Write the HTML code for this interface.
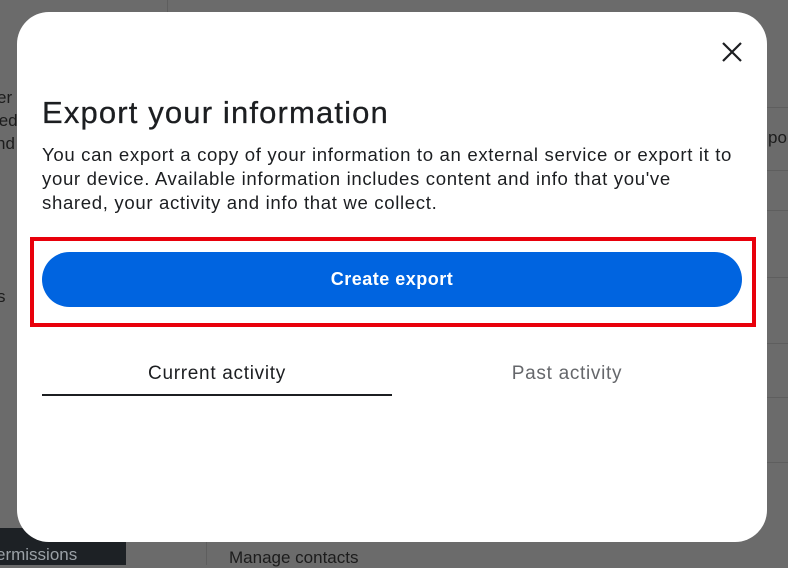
<!DOCTYPE html>
<html><head><meta charset="utf-8"><style>
*{margin:0;padding:0;box-sizing:border-box}
body{width:788px;height:565px;overflow:hidden;background:#6b6b6b;font-family:"Liberation Sans",sans-serif;position:relative}
.bg{position:absolute;color:#1c1c1c;font-size:17px}
.line{position:absolute;background:#5e5e5e;height:1px}
.modal{position:absolute;left:17px;top:12px;width:750px;height:530px;background:#fff;border-radius:32px}
h1{position:absolute;left:25px;top:83px;font-size:31px;font-weight:normal;color:#1c1e21;letter-spacing:1.15px;white-space:nowrap;-webkit-text-stroke:0.3px #1c1e21}
p{position:absolute;left:25px;top:131px;width:720px;font-size:18.6px;line-height:24px;color:#1c1e21;letter-spacing:0.65px;white-space:nowrap}
.red{position:absolute;left:13px;top:225px;width:726px;height:90px;border:4px solid #e8000b}
.btn{position:absolute;left:25px;top:240px;width:700px;height:55px;border-radius:28px;background:#0064e0;color:#fff;font-size:18px;font-weight:bold;text-align:center;line-height:55px;letter-spacing:0.5px}
.tab{position:absolute;top:351px;font-size:19px;text-align:center;width:350px;letter-spacing:0.7px}
.ul{position:absolute;left:25px;top:382px;width:350px;height:2px;background:#1c1e21}
</style></head><body>
<div class="line" style="left:167px;top:0;width:1px;height:12px"></div>
<div class="line" style="left:767px;top:107px;width:21px"></div>
<div class="line" style="left:767px;top:170px;width:21px"></div>
<div class="line" style="left:767px;top:210px;width:21px"></div>
<div class="line" style="left:767px;top:277px;width:21px"></div>
<div class="line" style="left:767px;top:343px;width:21px"></div>
<div class="line" style="left:767px;top:397px;width:21px"></div>
<div class="line" style="left:767px;top:462px;width:21px"></div>
<div class="bg" style="left:-3px;top:88px">er</div>
<div class="bg" style="left:-6px;top:111px">ted</div>
<div class="bg" style="left:-4px;top:134px">nd</div>
<div class="bg" style="left:-3px;top:287px">s</div>
<div class="bg" style="left:768px;top:128px">po</div>
<div style="position:absolute;left:0;top:528px;width:126px;height:37px;background:#1d2125"></div>
<div class="bg" style="left:-4px;top:545px;color:#9aa0a6">ermissions</div>
<div class="line" style="left:206px;top:542px;width:1px;height:23px"></div>
<div class="bg" style="left:229px;top:548px">Manage contacts</div>
<div class="modal">
<svg style="position:absolute;left:705px;top:30px" width="20" height="20" viewBox="0 0 20 20"><path d="M1 1L19 19M19 1L1 19" stroke="#1c1e21" stroke-width="2.2"/></svg>
<h1>Export your information</h1>
<p>You can export a copy of your information to an external service or export it to<br>your device. Available information includes content and info that you've<br>shared, your activity and info that we collect.</p>
<div class="red"></div>
<div class="btn">Create export</div>
<div class="tab" style="left:25px;color:#1c1e21">Current activity</div>
<div class="tab" style="left:375px;color:#65676b">Past activity</div>
<div class="ul"></div>
</div>
</body></html>
